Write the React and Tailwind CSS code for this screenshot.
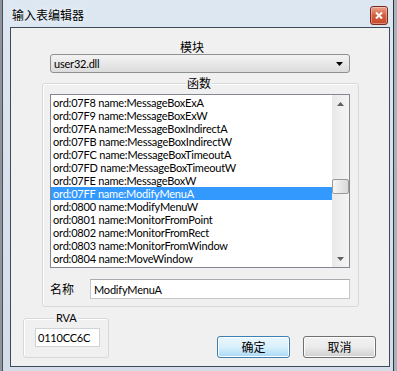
import React from "react";

const rows = [
  "ord:07F8 name:MessageBoxExA",
  "ord:07F9 name:MessageBoxExW",
  "ord:07FA name:MessageBoxIndirectA",
  "ord:07FB name:MessageBoxIndirectW",
  "ord:07FC name:MessageBoxTimeoutA",
  "ord:07FD name:MessageBoxTimeoutW",
  "ord:07FE name:MessageBoxW",
  "ord:07FF name:ModifyMenuA",
  "ord:0800 name:ModifyMenuW",
  "ord:0801 name:MonitorFromPoint",
  "ord:0802 name:MonitorFromRect",
  "ord:0803 name:MonitorFromWindow",
  "ord:0804 name:MoveWindow",
];

const cjk = { fontFamily: '"Noto Sans CJK SC", "Noto Sans", sans-serif' };
const ui = { fontFamily: 'Lato, "Noto Sans CJK SC", sans-serif' };

export default function App() {
  return (
    <div className="w-[397px] h-[371px] flex overflow-hidden bg-[#c9d1da]">
      {/* left background strip */}
      <div className="w-[3px] h-full bg-[#8d949c] border-r border-[#4a4f55]" />
      {/* window */}
      <div className="w-[390px] h-full flex flex-col bg-gradient-to-b from-[#dde7f2] to-[#d2dde9]">
        {/* title bar */}
        <div className="h-[27px] flex items-start">
          <div
            className="pl-[9px] pt-[7px] text-[12px] leading-[16px] text-black"
            style={{ ...cjk, textShadow: "0 0 6px #ffffff" }}
          >
            输入表编辑器
          </div>
          <div className="ml-auto mr-[5px] mt-[6px] w-[18px] h-[19px] rounded-[3px] border border-[#7a2a1c] bg-gradient-to-b from-[#e9a48e] via-[#d35d3e] to-[#c94a2c] flex items-center justify-center shadow-[inset_0_0_0_1px_rgba(255,255,255,0.35)]">
            <svg width="8" height="7" viewBox="0 0 8 7">
              <path d="M1 0.5 L7 6.5 M7 0.5 L1 6.5" stroke="#ffffff" strokeWidth="2" />
            </svg>
          </div>
        </div>
        {/* body */}
        <div className="flex flex-1">
          <div className="w-[7px]" />
          <div className="w-[380px] h-[340px] border border-[#3d4a58] bg-[#f0f0f0] flex flex-col text-black tracking-[-0.2px]" style={ui}>
            {/* 模块 label */}
            <div className="h-[26px] pt-[12px] pl-[169px] text-[12px] leading-[14px] tracking-normal" style={cjk}>
              模块
            </div>
            {/* combo */}
            <div className="ml-[39px] w-[300px] h-[19px] rounded-[3px] border border-[#8e8f8f] bg-gradient-to-b from-[#f3f3f3] to-[#dcdcdc] flex items-center pl-[3px] pr-[6px]">
              <span className="text-[11px] leading-[13px]">user32.dll</span>
              <svg className="ml-auto" width="7" height="4" viewBox="0 0 7 4">
                <path d="M0 0 H7 L3.5 4 Z" fill="#000" />
              </svg>
            </div>
            {/* group 函数 */}
            <div className="relative mt-[10px] ml-[31px] w-[317px] rounded-[3px] border border-[#d5d9dd] shadow-[inset_1px_1px_0_#ffffff] pt-[10px] pl-[7px] pb-[7px]">
              <div
                className="absolute top-[-8px] left-[143px] px-[1px] bg-[#f0f0f0] text-[12px] leading-[14px] tracking-normal"
                style={cjk}
              >
                函数
              </div>
              {/* listbox */}
              <div className="w-[300px] h-[174px] border border-[#828790] bg-white flex">
                <div className="w-[281px] pt-[1px] flex flex-col">
                  {rows.map((r, i) => (
                    <div
                      key={r}
                      className={
                        "h-[13px] pl-[2px] text-[11px] leading-[13px] whitespace-nowrap " +
                        (i === 7 ? "bg-[#3399ff] text-white" : "")
                      }
                    >
                      {r}
                    </div>
                  ))}
                </div>
                <div className="w-[17px] h-full bg-gradient-to-r from-[#e9e9e9] to-[#f5f5f5] flex flex-col">
                  <div className="h-[17px] flex items-center justify-center">
                    <svg width="7" height="4" viewBox="0 0 7 4">
                      <path d="M0 4 H7 L3.5 0 Z" fill="#606060" />
                    </svg>
                  </div>
                  <div className="mt-[67px] h-[15px] rounded-[2px] border border-[#9a9a9a] bg-gradient-to-r from-[#f6f6f6] to-[#d9d9d9]" />
                  <div className="flex-1" />
                  <div className="h-[17px] flex items-center justify-center">
                    <svg width="7" height="4" viewBox="0 0 7 4">
                      <path d="M0 0 H7 L3.5 4 Z" fill="#606060" />
                    </svg>
                  </div>
                </div>
              </div>
              {/* 名称 row */}
              <div className="mt-[11px] flex items-center">
                <div className="w-[40px] text-[12px] leading-[14px] tracking-normal" style={cjk}>
                  名称
                </div>
                <div className="w-[260px] h-[20px] border border-[#c3c6ca] border-t-[#a8abb0] bg-white flex items-center pl-[3px] text-[11px] leading-[13px]">
                  ModifyMenuA
                </div>
              </div>
            </div>
            {/* bottom row */}
            <div className="mt-[11px] flex items-end">
              <div className="relative ml-[12px] w-[86px] h-[40px] rounded-[3px] border border-[#d5d9dd] shadow-[inset_1px_1px_0_#ffffff] pt-[9px] pl-[11px]">
                <div className="absolute top-[-8px] left-[30px] px-[2px] bg-[#f0f0f0] text-[11px] leading-[14px]">
                  RVA
                </div>
                <div className="w-[65px] h-[19px] border border-[#d0d3d6] bg-white flex items-center pl-[2px] text-[11px] leading-[13px]">
                  0110CC6C
                </div>
              </div>
              <div
                className="ml-[108px] w-[73px] h-[22px] rounded-[3px] border border-[#3c7fb1] bg-gradient-to-b from-[#eaf6fd] via-[#d9f0fc] to-[#a7d9f5] shadow-[inset_0_0_0_1px_#ffffff] flex items-center justify-center text-[12px] leading-[14px] tracking-normal"
                style={cjk}
              >
                确定
              </div>
              <div
                className="ml-[13px] w-[73px] h-[22px] rounded-[3px] border border-[#707070] bg-gradient-to-b from-[#f2f2f2] via-[#ebebeb] to-[#cfcfcf] shadow-[inset_0_0_0_1px_#fbfbfb] flex items-center justify-center text-[12px] leading-[14px] tracking-normal"
                style={cjk}
              >
                取消
              </div>
            </div>
          </div>
          <div className="w-[3px]" />
        </div>
        <div className="h-[4px]" />
      </div>
      {/* right background strip */}
      <div className="w-[4px] h-full bg-[#a9b2bc] border-l border-[#2f353b]" />
    </div>
  );
}
